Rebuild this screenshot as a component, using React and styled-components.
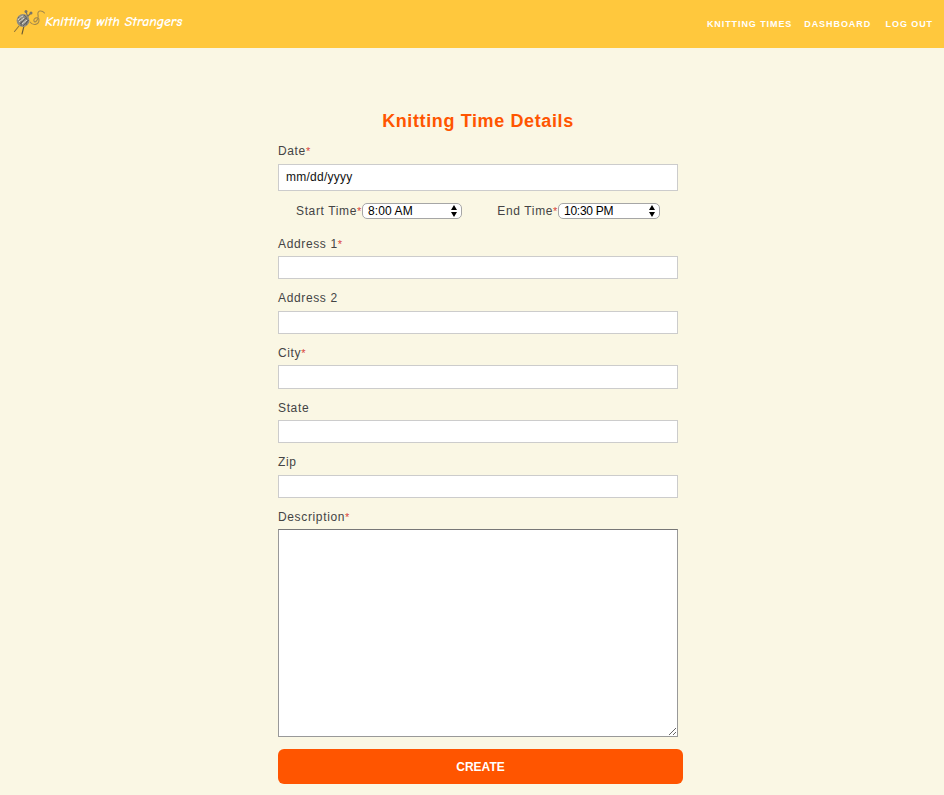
import React from "react";
import styled, { createGlobalStyle } from "styled-components";

const GlobalStyle = createGlobalStyle`
  * { box-sizing: border-box; }
  body {
    margin: 0;
    background: #faf7e4;
    color: #444;
    font-family: "Liberation Sans", Arial, sans-serif;
    font-size: 12px;
    overflow: hidden;
  }
`;

const Header = styled.header`
  display: flex;
  justify-content: space-between;
  height: 48px;
  background: #ffc83d;
  color: #fff;
`;

const Brand = styled.a`
  display: flex;
  align-items: flex-start;
  padding: 8px 0 0 12px;
`;

const BrandIcon = styled.svg`
  width: 33px;
  height: 28px;
  flex: none;
`;

const BrandName = styled.span`
  font-family: "Comic Neue", "Comic Sans MS", cursive;
  font-weight: 700;
  font-style: italic;
  font-size: 14px;
  line-height: 18px;
  letter-spacing: -0.05px;
  padding-top: 5px;
  white-space: nowrap;
`;

const Nav = styled.nav`
  display: flex;
  padding: 18px 11px 0 0;
`;

const NavLink = styled.a`
  font-size: 9px;
  font-weight: bold;
  line-height: 12px;
  letter-spacing: 0.92px;
  white-space: nowrap;
  margin-left: ${(p) => p.$gap || 0}px;
`;

const Form = styled.form`
  display: flex;
  flex-direction: column;
  width: 400px;
  margin: 60px 0 0 278px;
`;

const Title = styled.h1`
  margin: 0;
  height: 30px;
  line-height: 26px;
  font-size: 18px;
  letter-spacing: 0.62px;
  text-align: center;
  color: #ff5500;
  white-space: nowrap;
`;

const Field = styled.div`
  height: ${(p) => p.$height || 54.67}px;
`;

const Label = styled.label`
  display: block;
  height: ${(p) => p.$height || 25.43}px;
  line-height: 26px;
  letter-spacing: 0.64px;
  white-space: nowrap;
`;

const Required = styled.span`
  color: #d9443c;
  font-size: 11px;
  line-height: 1;
`;

const TextInput = styled.input`
  display: block;
  width: 400px;
  height: ${(p) => p.$height || 23.33}px;
  margin: 0;
  padding: 0 7px 2px;
  border: 1px solid #ccc;
  border-radius: 0;
  background: #fff;
  font: 12px "Liberation Sans", Arial, sans-serif;
  letter-spacing: 0.25px;
  color: #111;
  outline: none;
  &::placeholder { color: #111; opacity: 1; }
`;

const TimeRow = styled.div`
  display: grid;
  grid-template-columns: 84px 100px 96px 102px;
  height: 27.67px;
  margin-top: -1px;
  align-items: start;
`;

const TimeLabel = styled.label`
  text-align: right;
  line-height: 16px;
  letter-spacing: 0.64px;
  white-space: nowrap;
`;

const Picker = styled.button`
  display: flex;
  align-items: center;
  justify-content: space-between;
  height: 16px;
  padding: 0 4px 0 5px;
  border: 1px solid #a6a6a6;
  border-radius: 5px;
  background: #fff;
  color: #000;
  font: 12px/14px "Liberation Sans", Arial, sans-serif;
  letter-spacing: ${(p) => p.$tracking}px;
`;

const Arrows = styled.svg`
  width: 6px;
  height: 12px;
`;

const Description = styled.textarea`
  display: block;
  width: 400px;
  height: 208px;
  margin: 0;
  padding: 4px;
  border: 1px solid #999;
  border-top-color: #777;
  border-radius: 0;
  background: #fff;
  outline: none;
  resize: both;
`;

const Submit = styled.button`
  width: 405px;
  height: 35px;
  margin-top: 12px;
  padding: 0;
  border: 0;
  border-radius: 6px;
  background: #ff5500;
  color: #fff;
  font: bold 12px "Liberation Sans", Arial, sans-serif;
`;

const addressFields = [
  { name: "Address 1", required: true },
  { name: "Address 2" },
  { name: "City", required: true },
  { name: "State" },
  { name: "Zip" },
];

const YarnIcon = () => (
  <BrandIcon viewBox="0 0 33 28" fill="none">
    <g strokeWidth="1.1" strokeLinecap="round">
      <path d="M14 4L16 9M19 5L15 9" stroke="#79705a" />
      <path d="M7 18L2.5 23.5" stroke="#92763a" />
      <path d="M12 18L10 26" stroke="#6b5a33" />
      <path d="M18 14C21 18 27 17 27 12C27 8 21 10 22 13C23 16 27 11 26 7C25 2 30 2 32.5 5" stroke="#a58a4b" />
    </g>
    <circle cx="11" cy="12.5" r="6.4" fill="#8e8c82" />
    <g stroke="#55575a" strokeWidth=".8">
      <path d="M12 7C15 9 16 13 14 17M6 9C8 10 10 14 9 18" />
      <path d="M8 16L14 10M11 18L17 12" />
    </g>
    <path d="M6 12C8 9 9 9 11 8M7 14L12 10M10 16L15 12" stroke="#dedbd1" strokeWidth="1" />
    <circle cx="14" cy="3.5" r="1.5" fill="#77746a" />
    <circle cx="19" cy="5" r="1.5" fill="#77746a" />
  </BrandIcon>
);

const TimePicker = ({ value, tracking = 0 }) => (
  <Picker type="button" $tracking={tracking}>
    {value}
    <Arrows viewBox="0 0 6 12">
      <path d="M0 5L3 0L6 5ZM0 7L3 12L6 7Z" fill="#000" />
    </Arrows>
  </Picker>
);

export default function App() {
  return (
    <>
      <GlobalStyle />
      <Header>
        <Brand>
          <YarnIcon />
          <BrandName>Knitting with Strangers</BrandName>
        </Brand>
        <Nav>
          <NavLink>KNITTING TIMES</NavLink>
          <NavLink $gap={12}>DASHBOARD</NavLink>
          <NavLink $gap={14.5}>LOG OUT</NavLink>
        </Nav>
      </Header>
      <Form>
        <Title>Knitting Time Details</Title>
        <Field $height={66}>
          <Label $height={26}>Date<Required>*</Required></Label>
          <TextInput $height={27} placeholder="mm/dd/yyyy" />
        </Field>
        <TimeRow>
          <TimeLabel>Start Time<Required>*</Required></TimeLabel>
          <TimePicker value="8:00 AM" tracking={0.1} />
          <TimeLabel>End Time<Required>*</Required></TimeLabel>
          <TimePicker value="10:30 PM" tracking={-0.25} />
        </TimeRow>
        {addressFields.map((field) => (
          <Field key={field.name}>
            <Label>
              {field.name}
              {field.required && <Required>*</Required>}
            </Label>
            <TextInput />
          </Field>
        ))}
        <Label>Description<Required>*</Required></Label>
        <Description />
        <Submit type="button">CREATE</Submit>
      </Form>
    </>
  );
}
